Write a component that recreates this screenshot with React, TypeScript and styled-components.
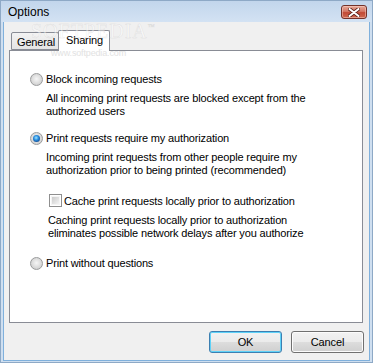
import React from 'react';
import styled, { createGlobalStyle } from 'styled-components';

const GlobalStyle = createGlobalStyle`
  html, body {
    margin: 0;
    padding: 0;
    background: #ffffff;
  }
  body {
    font-family: "Liberation Sans", Arial, sans-serif;
    font-size: 11px;
    letter-spacing: -0.15px;
    color: #000;
  }
`;

const Window = styled.div`
  position: relative;
  width: 373px;
  height: 363px;
  box-sizing: border-box;
  display: flex;
  flex-direction: column;
  background: #cfdff0;
  border: 1px solid #8ea9c6;
  overflow: hidden;
`;

const TitleBar = styled.div`
  height: 21px;
  flex: none;
  display: flex;
  align-items: center;
  justify-content: space-between;
  padding: 0 5px 0 7px;
  background: linear-gradient(#c2d6ec, #d3e2f3);
`;

const Title = styled.span`
  font-size: 12px;
  letter-spacing: 0;
  color: #000;
`;

const CloseButton = styled.div`
  width: 26px;
  height: 14px;
  box-sizing: border-box;
  margin-top: 1px;
  display: flex;
  align-items: center;
  justify-content: center;
  border: 1px solid #73322a;
  border-radius: 3px;
  background: linear-gradient(#e6a898 0%, #d47866 45%, #c24a36 55%, #cf6a52 100%);
  box-shadow: inset 0 0 0 1px rgba(255, 220, 210, 0.45);
`;

const Client = styled.div`
  flex: 1;
  display: flex;
  flex-direction: column;
  margin: 0 2px 1px 2px;
  padding: 8px 6px 7px 5px;
  background: #f0f0f0;
  border: 1px solid #7fb0dc;
  border-top: none;
`;

const TabRow = styled.div`
  height: 20px;
  display: flex;
  align-items: flex-end;
  padding-left: 2px;
`;

const Tab = styled.div<{ $active?: boolean }>`
  position: relative;
  box-sizing: border-box;
  display: flex;
  align-items: ${p => (p.$active ? 'flex-start' : 'center')};
  border: 1px solid #898c95;
  border-bottom: ${p => (p.$active ? 'none' : '1px solid #898c95')};
  border-radius: 2px 2px 0 0;
  width: ${p => (p.$active ? '52px' : '48px')};
  height: ${p => (p.$active ? '21px' : '18px')};
  padding: ${p => (p.$active ? '3px 0 0 7px' : '1px 0 0 5px')};
  margin-left: ${p => (p.$active ? '-1px' : '0')};
  margin-bottom: ${p => (p.$active ? '-1px' : '0')};
  z-index: ${p => (p.$active ? 1 : 0)};
  background: ${p => (p.$active ? '#ffffff' : 'linear-gradient(#f3f3f3, #e4e4e4)')};
`;

const Panel = styled.div`
  flex: 1;
  display: flex;
  flex-direction: column;
  background: #ffffff;
  border: 1px solid #898c95;
  padding: 22px 0 0 20px;
  margin-bottom: 8px;
`;

const OptionRow = styled.label<{ $top?: number; $indent?: number }>`
  display: flex;
  align-items: center;
  height: 13px;
  line-height: 13px;
  margin-top: ${p => p.$top ?? 0}px;
  margin-left: ${p => p.$indent ?? 0}px;
`;

const Radio = styled.span<{ $checked?: boolean }>`
  position: relative;
  width: 13px;
  height: 13px;
  box-sizing: border-box;
  flex: none;
  margin-right: 3px;
  border-radius: 50%;
  border: 1px solid #9a9b9c;
  background: radial-gradient(circle at 50% 45%, #f6f6f6 0%, #e0e0e0 45%, #c4c4c4 100%);

  &::after {
    content: '';
    display: ${p => (p.$checked ? 'block' : 'none')};
    position: absolute;
    inset: 2px;
    border-radius: 50%;
    background: radial-gradient(circle at 45% 40%, #9fe6ff 0%, #2a8ee0 40%, #134f96 75%, #1c3f6b 100%);
  }
`;

const Checkbox = styled.span`
  width: 13px;
  height: 13px;
  box-sizing: border-box;
  flex: none;
  margin-right: 2px;
  margin-top: -2px;
  border: 1px solid #8f8f8f;
  background: #f4f4f4;
  box-shadow: inset 0 0 0 1px #ffffff;

  &::after {
    content: '';
    display: block;
    margin: 2px;
    width: 7px;
    height: 7px;
    background: linear-gradient(135deg, #cbcbcb, #f3f3f3);
  }
`;

const Description = styled.div<{ $indent: number }>`
  margin-top: 6px;
  margin-left: ${p => p.$indent}px;
  line-height: 13px;
`;

const ButtonRow = styled.div`
  display: flex;
  justify-content: flex-end;
  gap: 9px;
  margin-right: -1px;
`;

const Button = styled.div<{ $default?: boolean }>`
  width: 73px;
  height: 22px;
  box-sizing: border-box;
  display: flex;
  align-items: center;
  justify-content: center;
  border-radius: 3px;
  border: 1px solid ${p => (p.$default ? '#3c7fb1' : '#707070')};
  box-shadow: ${p => (p.$default ? 'inset 0 0 0 1px #5fd2f8' : 'inset 0 0 0 1px #fcfcfc')};
  background: linear-gradient(#f2f2f2 0%, #ebebeb 49%, #dddddd 51%, #cfcfcf 100%);
`;

const Watermark = styled.div`
  position: absolute;
  left: 30px;
  top: 19px;
  font-family: "Liberation Serif", "Times New Roman", serif;
  font-size: 20px;
  letter-spacing: 1px;
  color: rgba(255, 255, 255, 0.45);
  -webkit-text-stroke: 0.5px rgba(150, 150, 150, 0.22);
  pointer-events: none;
  z-index: 5;

  sup {
    font-size: 7px;
    vertical-align: 9px;
  }
`;

const WatermarkUrl = styled.div`
  position: absolute;
  left: 50px;
  top: 47px;
  font-size: 9px;
  color: #e2e2e2;
  pointer-events: none;
  z-index: 5;
`;

const CloseIcon = () => (
  <svg width="12" height="9" viewBox="0 0 12 9">
    <path d="M1.5 1 L10.5 8 M10.5 1 L1.5 8" stroke="#5a2019" strokeWidth="3.6" strokeLinecap="round" />
    <path d="M1.5 1 L10.5 8 M10.5 1 L1.5 8" stroke="#ffffff" strokeWidth="2" strokeLinecap="round" />
  </svg>
);

const App = (): JSX.Element => {
  return (
    <>
      <GlobalStyle />
      <Window>
        <TitleBar>
          <Title>Options</Title>
          <CloseButton>
            <CloseIcon />
          </CloseButton>
        </TitleBar>
        <Client>
          <TabRow>
            <Tab>General</Tab>
            <Tab $active>Sharing</Tab>
          </TabRow>
          <Panel>
            <OptionRow>
              <Radio />
              Block incoming requests
            </OptionRow>
            <Description $indent={16}>
              All incoming print requests are blocked except from the
              <br />
              authorized users
            </Description>

            <OptionRow $top={14}>
              <Radio $checked />
              Print requests require my authorization
            </OptionRow>
            <Description $indent={16}>
              Incoming print requests from other people require my
              <br />
              authorization prior to being printed (recommended)
            </Description>

            <OptionRow $top={18} $indent={19}>
              <Checkbox />
              Cache print requests locally prior to authorization
            </OptionRow>
            <Description $indent={18}>
              Caching print requests locally prior to authorization
              <br />
              eliminates possible network delays after you authorize
            </Description>

            <OptionRow $top={17}>
              <Radio />
              Print without questions
            </OptionRow>
          </Panel>
          <ButtonRow>
            <Button $default>OK</Button>
            <Button>Cancel</Button>
          </ButtonRow>
        </Client>
        <Watermark>
          SOFTPEDIA<sup>™</sup>
        </Watermark>
        <WatermarkUrl>www.softpedia.com</WatermarkUrl>
      </Window>
    </>
  );
};

export default App;
